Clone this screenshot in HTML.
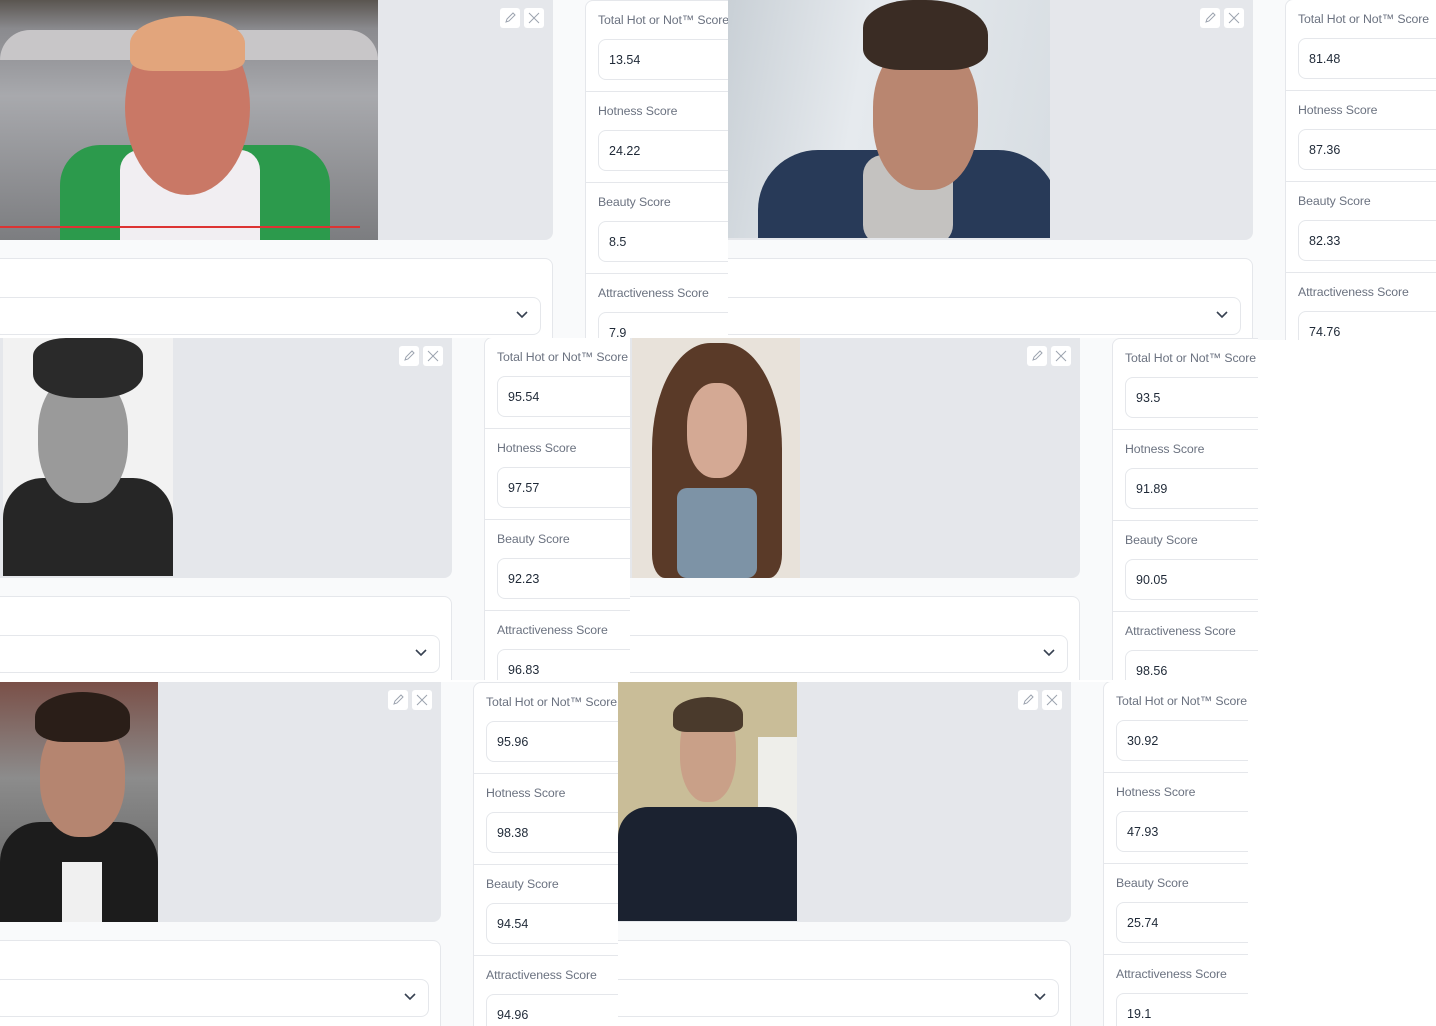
<!DOCTYPE html>
<html><head><meta charset="utf-8"><style>
*{box-sizing:border-box;margin:0;padding:0}
body{width:1436px;height:1026px;background:#fff;position:relative;overflow:hidden;font-family:"Liberation Sans",sans-serif}
.tile{position:absolute;overflow:hidden;background:#f9fafb}
.gray{position:absolute;left:0;top:0;height:240px;background:#e5e7eb;border-radius:0 0 8px 0}
.ph{position:absolute;top:0;overflow:hidden}
.ph div{position:absolute}
.ic{position:absolute;top:8px;width:20px;height:20px;background:#fff;border-radius:3px}
.ic svg{position:absolute;left:4px;top:4px}
.dd{position:absolute;top:258px;left:-8px;bottom:-10px;background:#fff;border:1px solid #e5e7eb;border-radius:8px}
.sel{position:absolute;top:38px;left:0;height:38px;background:#fff;border:1px solid #e5e7eb;border-radius:8px}
.sel svg{position:absolute;right:12px;top:13px}
.pn{position:absolute;top:0;bottom:-10px;right:-20px;background:#fff;border:1px solid #e5e7eb;border-radius:8px}
.row{position:absolute;left:0;right:0;height:91px;border-bottom:1px solid #e5e7eb}
.lb{position:absolute;left:12px;top:12px;font-size:12.3px;color:#6b7280;white-space:nowrap;letter-spacing:-0.1px}
.in{position:absolute;left:12px;right:0;top:38px;height:41px;border:1px solid #e5e7eb;border-radius:8px;font-size:12.5px;color:#1f2937;padding:13px 0 0 10px}
</style></head><body>

<!-- Tile 1 -->
<div class="tile" style="left:0;top:0;width:728px;height:340px">
 <div class="gray" style="width:553px"></div>
 <div class="ph" style="left:0;width:378px;height:240px;background:linear-gradient(#5a5550 0,#8a8a8e 12%,#a8a9ad 40%,#7c7d80 100%)">
  <div style="left:0;top:30px;width:378px;height:30px;background:#c8c6c8;border-radius:40px 40px 0 0"></div>
  <div style="left:60px;top:145px;width:270px;height:100px;background:#2c9a4c;border-radius:40px 40px 0 0"></div>
  <div style="left:120px;top:150px;width:140px;height:95px;background:#f1eef2;border-radius:20px 20px 0 0"></div>
  <div style="left:125px;top:20px;width:125px;height:175px;background:#c97866;border-radius:50%"></div>
  <div style="left:130px;top:16px;width:115px;height:55px;background:#e2a57c;border-radius:50% 50% 20% 20%"></div>
  <div style="left:0;top:226px;width:360px;height:2px;background:#d33"></div>
 </div>
 <div class="ic" style="left:500px"><svg width="12" height="12"><path d="M2 10l1-3 6-6 2 2-6 6z" stroke="#9ca3af" fill="none"/></svg></div><div class="ic" style="left:524px"><svg width="12" height="12"><path d="M1 1l10 10M11 1L1 11" stroke="#9ca3af"/></svg></div>
 <div class="dd" style="width:561px"><div class="sel" style="left:0;width:548px"><svg width="12" height="8"><path d="M1 1l5 5 5-5" stroke="#374151" stroke-width="1.6" fill="none"/></svg></div></div>
 <div class="pn" style="left:585px">
  <div class="row" style="top:0"><div class="lb">Total Hot or Not™ Score</div><div class="in">13.54</div></div>
  <div class="row" style="top:91px"><div class="lb">Hotness Score</div><div class="in">24.22</div></div>
  <div class="row" style="top:182px"><div class="lb">Beauty Score</div><div class="in">8.5</div></div>
  <div class="row" style="top:273px"><div class="lb">Attractiveness Score</div><div class="in">7.9</div></div>
 </div>
</div>

<!-- Tile 2 -->
<div class="tile" style="left:728px;top:0;width:708px;height:340px">
 <div class="gray" style="width:525px"></div>
 <div class="ph" style="left:0;width:322px;height:238px;background:linear-gradient(100deg,#c9d0d6,#e6eaee 40%,#d7dde2)">
  <div style="left:30px;top:150px;width:300px;height:120px;background:#283a58;border-radius:60px 60px 0 0"></div>
  <div style="left:135px;top:155px;width:90px;height:90px;background:#c4c2c0;border-radius:20px"></div>
  <div style="left:145px;top:40px;width:105px;height:150px;background:#b98670;border-radius:45%"></div>
  <div style="left:135px;top:0;width:125px;height:70px;background:#3a2c24;border-radius:40% 50% 30% 30%"></div>
 </div>
 <div class="ic" style="left:472px"><svg width="12" height="12"><path d="M2 10l1-3 6-6 2 2-6 6z" stroke="#9ca3af" fill="none"/></svg></div><div class="ic" style="left:496px"><svg width="12" height="12"><path d="M1 1l10 10M11 1L1 11" stroke="#9ca3af"/></svg></div>
 <div class="dd" style="width:533px"><div class="sel" style="left:0;width:520px"><svg width="12" height="8"><path d="M1 1l5 5 5-5" stroke="#374151" stroke-width="1.6" fill="none"/></svg></div></div>
 <div class="pn" style="left:557px;top:-1px">
  <div class="row" style="top:0"><div class="lb">Total Hot or Not™ Score</div><div class="in">81.48</div></div>
  <div class="row" style="top:91px"><div class="lb">Hotness Score</div><div class="in">87.36</div></div>
  <div class="row" style="top:182px"><div class="lb">Beauty Score</div><div class="in">82.33</div></div>
  <div class="row" style="top:273px"><div class="lb">Attractiveness Score</div><div class="in">74.76</div></div>
 </div>
</div>

<!-- Tile 3 -->
<div class="tile" style="left:0;top:338px;width:630px;height:342px">
 <div class="gray" style="width:452px"></div>
 <div class="ph" style="left:3px;width:170px;height:238px;background:#f2f2f2">
  <div style="left:0;top:140px;width:170px;height:100px;background:#262626;border-radius:40px 40px 0 0"></div>
  <div style="left:35px;top:35px;width:90px;height:130px;background:#9a9a9a;border-radius:45%"></div>
  <div style="left:30px;top:0;width:110px;height:60px;background:#2a2a2a;border-radius:30% 30% 40% 40%"></div>
 </div>
 <div class="ic" style="left:399px"><svg width="12" height="12"><path d="M2 10l1-3 6-6 2 2-6 6z" stroke="#9ca3af" fill="none"/></svg></div><div class="ic" style="left:423px"><svg width="12" height="12"><path d="M1 1l10 10M11 1L1 11" stroke="#9ca3af"/></svg></div>
 <div class="dd" style="width:460px"><div class="sel" style="left:0;width:447px"><svg width="12" height="8"><path d="M1 1l5 5 5-5" stroke="#374151" stroke-width="1.6" fill="none"/></svg></div></div>
 <div class="pn" style="left:484px;top:-1px">
  <div class="row" style="top:0"><div class="lb">Total Hot or Not™ Score</div><div class="in">95.54</div></div>
  <div class="row" style="top:91px"><div class="lb">Hotness Score</div><div class="in">97.57</div></div>
  <div class="row" style="top:182px"><div class="lb">Beauty Score</div><div class="in">92.23</div></div>
  <div class="row" style="top:273px"><div class="lb">Attractiveness Score</div><div class="in">96.83</div></div>
 </div>
</div>

<!-- Tile 4 -->
<div class="tile" style="left:630px;top:338px;width:628px;height:342px">
 <div class="gray" style="width:450px"></div>
 <div class="ph" style="left:2px;width:168px;height:240px;background:#e8e2da">
  <div style="left:20px;top:5px;width:130px;height:235px;background:#5a3a28;border-radius:45% 45% 10% 10%"></div>
  <div style="left:45px;top:150px;width:80px;height:90px;background:#7d93a6;border-radius:10px"></div>
  <div style="left:55px;top:45px;width:60px;height:95px;background:#d4a994;border-radius:45%"></div>
 </div>
 <div class="ic" style="left:397px;top:8px"><svg width="12" height="12"><path d="M2 10l1-3 6-6 2 2-6 6z" stroke="#9ca3af" fill="none"/></svg></div><div class="ic" style="left:421px;top:8px"><svg width="12" height="12"><path d="M1 1l10 10M11 1L1 11" stroke="#9ca3af"/></svg></div>
 <div class="dd" style="width:458px;top:258px"><div class="sel" style="left:0;width:445px"><svg width="12" height="8"><path d="M1 1l5 5 5-5" stroke="#374151" stroke-width="1.6" fill="none"/></svg></div></div>
 <div class="pn" style="left:482px;top:0">
  <div class="row" style="top:0"><div class="lb">Total Hot or Not™ Score</div><div class="in">93.5</div></div>
  <div class="row" style="top:91px"><div class="lb">Hotness Score</div><div class="in">91.89</div></div>
  <div class="row" style="top:182px"><div class="lb">Beauty Score</div><div class="in">90.05</div></div>
  <div class="row" style="top:273px"><div class="lb">Attractiveness Score</div><div class="in">98.56</div></div>
 </div>
</div>

<!-- Tile 5 -->
<div class="tile" style="left:0;top:682px;width:618px;height:344px">
 <div class="gray" style="width:441px"></div>
 <div class="ph" style="left:0;width:158px;height:240px;background:linear-gradient(#7a5048,#8c8c8c 40%,#5a5a5a)">
  <div style="left:0;top:140px;width:158px;height:100px;background:#1c1c1c;border-radius:40px 40px 0 0"></div>
  <div style="left:62px;top:180px;width:40px;height:60px;background:#f0f0f0"></div>
  <div style="left:40px;top:35px;width:85px;height:120px;background:#b58570;border-radius:45%"></div>
  <div style="left:35px;top:10px;width:95px;height:50px;background:#2a1e18;border-radius:50% 50% 30% 30%"></div>
 </div>
 <div class="ic" style="left:388px"><svg width="12" height="12"><path d="M2 10l1-3 6-6 2 2-6 6z" stroke="#9ca3af" fill="none"/></svg></div><div class="ic" style="left:412px"><svg width="12" height="12"><path d="M1 1l10 10M11 1L1 11" stroke="#9ca3af"/></svg></div>
 <div class="dd" style="width:449px"><div class="sel" style="left:0;width:436px"><svg width="12" height="8"><path d="M1 1l5 5 5-5" stroke="#374151" stroke-width="1.6" fill="none"/></svg></div></div>
 <div class="pn" style="left:473px">
  <div class="row" style="top:0"><div class="lb">Total Hot or Not™ Score</div><div class="in">95.96</div></div>
  <div class="row" style="top:91px"><div class="lb">Hotness Score</div><div class="in">98.38</div></div>
  <div class="row" style="top:182px"><div class="lb">Beauty Score</div><div class="in">94.54</div></div>
  <div class="row" style="top:273px"><div class="lb">Attractiveness Score</div><div class="in">94.96</div></div>
 </div>
</div>

<!-- Tile 6 -->
<div class="tile" style="left:618px;top:682px;width:630px;height:344px">
 <div class="gray" style="width:453px"></div>
 <div class="ph" style="left:0;width:179px;height:239px;background:#c9bd98">
  <div style="left:140px;top:55px;width:39px;height:184px;background:#eeeeea"></div>
  <div style="left:0;top:125px;width:179px;height:114px;background:#1b2230;border-radius:30px 30px 0 0"></div>
  <div style="left:62px;top:20px;width:56px;height:100px;background:#c9a088;border-radius:45%"></div>
  <div style="left:55px;top:15px;width:70px;height:35px;background:#4a3a2c;border-radius:50% 50% 20% 20%"></div>
 </div>
 <div class="ic" style="left:400px"><svg width="12" height="12"><path d="M2 10l1-3 6-6 2 2-6 6z" stroke="#9ca3af" fill="none"/></svg></div><div class="ic" style="left:424px"><svg width="12" height="12"><path d="M1 1l10 10M11 1L1 11" stroke="#9ca3af"/></svg></div>
 <div class="dd" style="width:461px"><div class="sel" style="left:0;width:448px"><svg width="12" height="8"><path d="M1 1l5 5 5-5" stroke="#374151" stroke-width="1.6" fill="none"/></svg></div></div>
 <div class="pn" style="left:485px;top:-1px">
  <div class="row" style="top:0"><div class="lb">Total Hot or Not™ Score</div><div class="in">30.92</div></div>
  <div class="row" style="top:91px"><div class="lb">Hotness Score</div><div class="in">47.93</div></div>
  <div class="row" style="top:182px"><div class="lb">Beauty Score</div><div class="in">25.74</div></div>
  <div class="row" style="top:273px"><div class="lb">Attractiveness Score</div><div class="in">19.1</div></div>
 </div>
</div>

</body></html>
